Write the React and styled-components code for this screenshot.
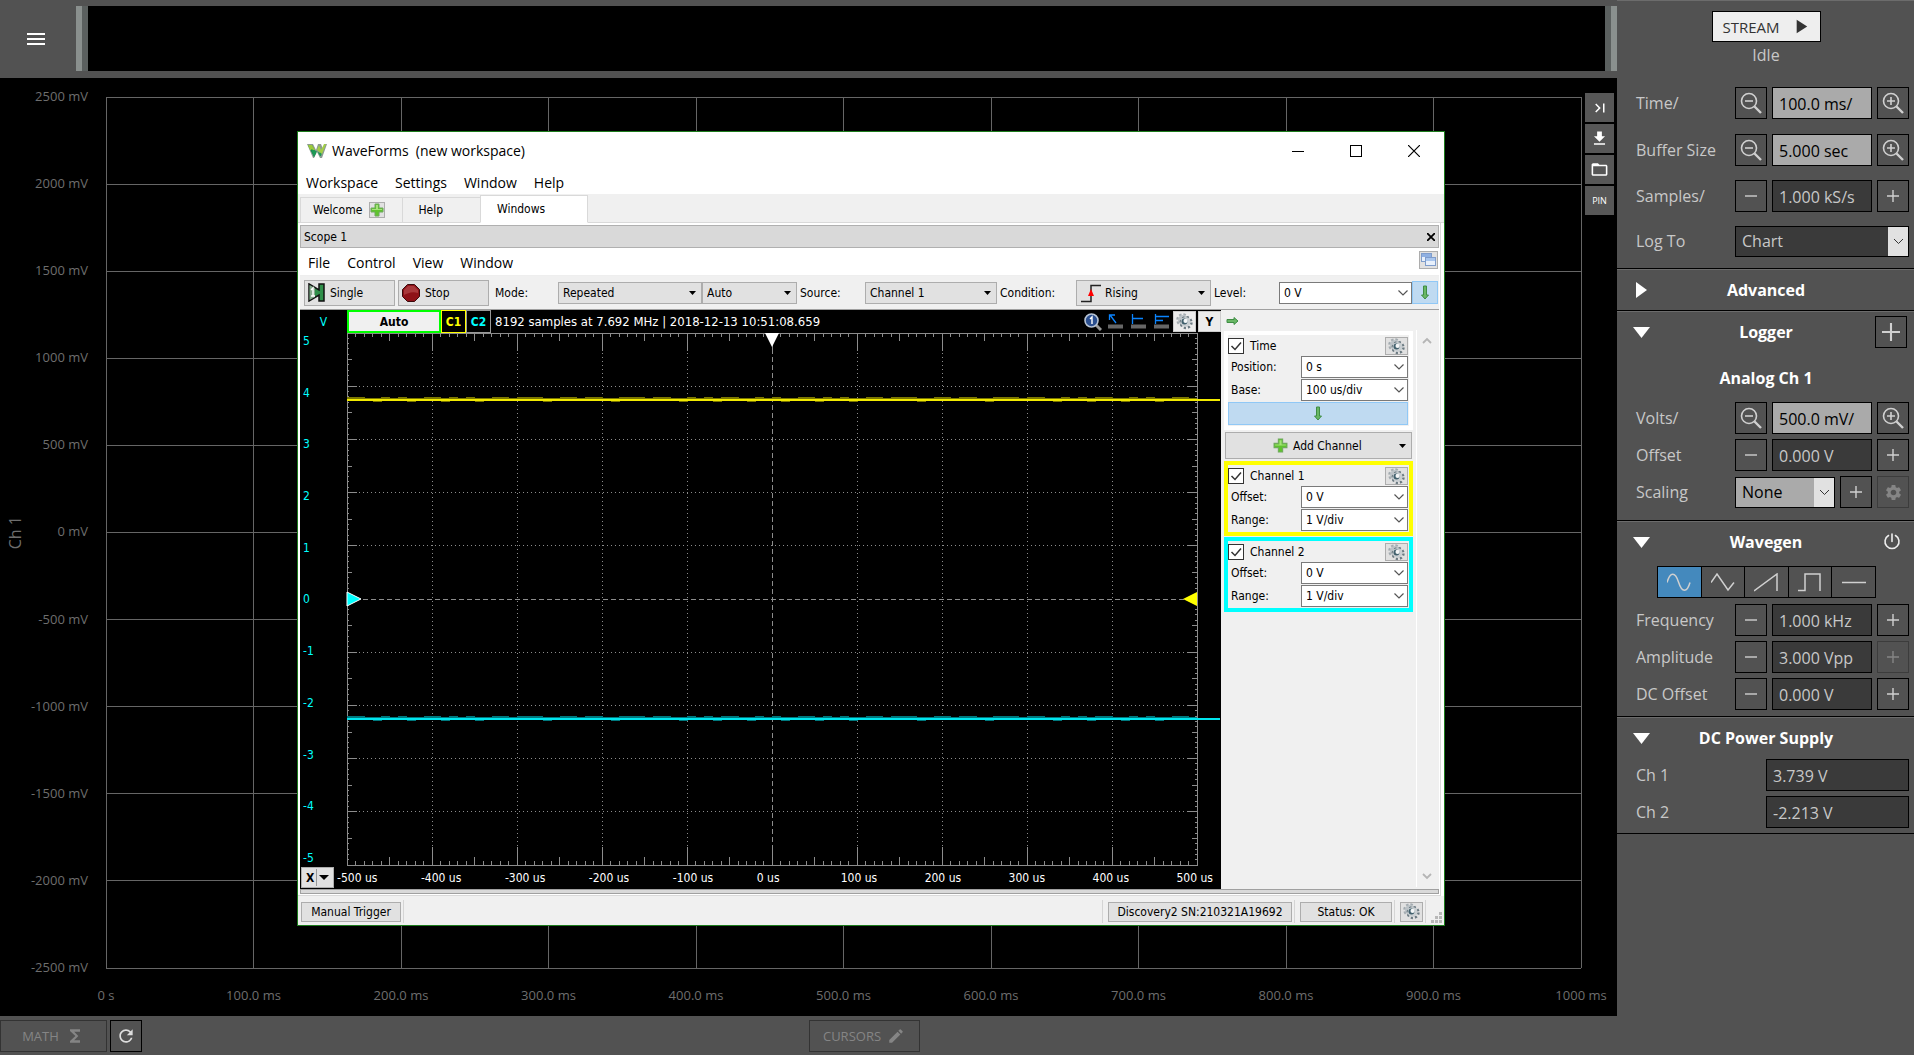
import React from "react";
import styled, { createGlobalStyle, css } from "styled-components";
import {
  MdMenu,
  MdRefresh,
  MdEdit,
  MdDownload,
  MdFolderOpen,
  MdFunctions,
  MdLastPage,
  MdPlayArrow,
  MdSettings,
} from "react-icons/md";

const GlobalStyle = createGlobalStyle`
  * {
    box-sizing: border-box;
  }

  body {
    margin: 0;
    background: #000;
    font-family: "Open Sans", sans-serif;
  }

  button, input, select {
    font: inherit;
    color: inherit;
    margin: 0;
    border-radius: 0;
  }
`;

/* ---------- page ---------- */

const Page = styled.div`
  display: flex;
  min-height: 100vh;
  background: #525252;
`;

const Main = styled.main`
  flex: 1;
  min-width: 0;
  display: flex;
  flex-direction: column;
`;

const TopBar = styled.header`
  display: flex;
  align-items: center;
  height: 78px;
  padding: 6px 0 7px;
`;

const MenuButton = styled.button`
  width: 76px;
  padding: 0 4px 0 0;
  border: 0;
  background: none;
  color: #fff;
  line-height: 0;
`;

const BufferBar = styled.div`
  flex: 1;
  height: 65px;
  background: #000;
  border-style: solid;
  border-width: 0 6px;
  border-color: #8a908e;
  display: flex;
  justify-content: space-between;
`;

const BufferHandle = styled.span`
  width: 6px;
  background: #5b605f;
`;

const ChartArea = styled.section`
  position: relative;
  flex: 1;
  display: grid;
  grid-template-columns: 30px 58px 18px 1fr 36px;
  grid-template-rows: 19px 1fr 48px;
  background: #000;
  color: #6e6e6e;
  font-size: 13px;
  line-height: 18px;
`;

const ChannelName = styled.div`
  grid-column: 1;
  grid-row: 2;
  place-self: center;
  writing-mode: vertical-rl;
  transform: rotate(180deg);
  font-size: 16px;
`;

const YAxis = styled.div`
  grid-column: 2;
  grid-row: 2;
  margin: -10px 0 -8px;
  display: flex;
  flex-direction: column;
  justify-content: space-between;
  text-align: right;
  white-space: nowrap;
`;

const ChartGrid = styled.svg`
  grid-column: 4;
  grid-row: 2;
  width: 100%;
  height: 100%;
  overflow: visible;
  stroke: #666;
  shape-rendering: crispEdges;
`;

const XAxis = styled.div`
  grid-column: 4;
  grid-row: 3;
  margin: 18px -40px 0;
  display: flex;
  justify-content: space-between;

  span {
    width: 80px;
    text-align: center;
  }
`;

const ChartTools = styled.div`
  grid-column: 5;
  grid-row: 1 / 3;
  padding: 15px 0 0 4px;
  display: flex;
  flex-direction: column;
  gap: 2px;
`;

const ToolButton = styled.button`
  width: 29px;
  height: 29px;
  padding: 0;
  border: 0;
  background: #575757;
  color: #fff;
  font-size: 9px;
  display: grid;
  place-items: center;
`;

const BottomBar = styled.footer`
  height: 39px;
  padding-top: 4px;
  display: grid;
  grid-template-columns: 1fr 1fr;
`;

const BarGroup = styled.div`
  display: flex;
  gap: 3px;
`;

const BarButton = styled.button`
  width: ${(p) => p.$w}px;
  height: 32px;
  padding: 0;
  border: 1px solid ${(p) => (p.disabled ? "#333" : "#000")};
  background: none;
  color: ${(p) => (p.disabled ? "#858585" : "#ddd")};
  font-size: 13px;
  display: flex;
  align-items: center;
  justify-content: center;
  gap: 6px;
`;

/* ---------- sidebar ---------- */

const Side = styled.aside`
  width: 297px;
  color: #c8c8c8;
  font-size: 16px;
  line-height: 22px;
`;

const Section = styled.section`
  padding: ${(p) => p.$pad || "0 5px 12px 19px"};
  border-bottom: 1px solid #000;
  box-shadow: inset 0 1px #6c6c6c;
`;

const RunBox = styled.div`
  height: 75px;
  display: flex;
  flex-direction: column;
  align-items: center;
  gap: 2px;
  padding-right: 13px;
`;

const StreamButton = styled.button`
  width: 109px;
  height: 31px;
  border: 1px solid #000;
  background: #eee;
  color: #333;
  font-size: 15px;
  padding: 0 8px 0 10px;
  display: flex;
  align-items: center;
  justify-content: space-between;
`;

const Rows = styled.div`
  display: flex;
  flex-direction: column;
  gap: ${(p) => p.$gap || 5}px;
`;

const Row = styled.div`
  display: flex;
  align-items: center;
  gap: 5px;
  height: ${(p) => (p.$tall ? 34 : 32)}px;

  label {
    flex: ${(p) => (p.$wideLabel ? "0 0 125px" : "0 0 94px")};
  }
`;

const SquareButton = styled.button`
  width: 32px;
  height: 32px;
  flex: none;
  padding: 0;
  border: 1px solid #000;
  background: none;
  color: #d0d0d0;
  display: grid;
  place-items: center;

  &:disabled {
    border-color: #3c3c3c;
    color: #858585;
  }
`;

const DarkField = styled.input`
  flex: 1;
  min-width: 0;
  height: 32px;
  padding: 1px 6px 0;
  border: 1px solid #000;
  background: ${(p) => (p.$light ? "#aaa" : "#3a3a3a")};
  color: ${(p) => (p.$light ? "#000" : "#c8c8c8")};
`;

const Stack = styled.span`
  display: grid;
  align-items: center;
  width: ${(p) => (p.$w ? p.$w + "px" : "auto")};
  flex: ${(p) => (p.$w ? "none" : 1)};

  > * {
    grid-area: 1 / 1;
  }

  > svg, > i {
    pointer-events: none;
    justify-self: end;
  }
`;

const DarkSelect = styled.select`
  appearance: none;
  width: 100%;
  height: 31px;
  padding: 0 6px;
  border: 1px solid #000;
  background: ${(p) => (p.$light ? "#aaa" : "#3a3a3a")};
  color: ${(p) => (p.$light ? "#000" : "#c8c8c8")};
`;

const ArrowBox = styled.i`
  width: 20px;
  height: 29px;
  margin-right: 1px;
  background: #e1e1e1;
  display: grid;
  place-items: center;
`;

const SectionHead = styled.div`
  display: grid;
  grid-template-columns: 32px 1fr 45px;
  align-items: center;
  height: ${(p) => p.$h || 42}px;

  h2 {
    margin: 0;
    text-align: center;
    color: #fff;
    font-size: 16px;
    font-weight: 700;
  }

  > :nth-child(3) {
    justify-self: end;
    margin-right: 2px;
  }
`;

const FoldButton = styled.button`
  padding: 0;
  border: 0;
  background: none;
  color: #fff;
  text-align: left;
  line-height: 0;
  margin-left: ${(p) => (p.$open ? "-3px" : "0")};
`;

const SubTitle = styled.h3`
  margin: 0;
  height: 49px;
  padding-right: 13px;
  line-height: 50px;
  text-align: center;
  color: #fff;
  font-size: 16px;
  font-weight: 700;
`;

const WaveButtons = styled.div`
  display: flex;
  width: 219px;
  margin: 3px auto 6px 21px;
  border: 1px solid #000;
`;

const WaveButton = styled.button`
  flex: 1;
  height: 30px;
  padding: 0;
  border: 0;
  border-left: ${(p) => (p.$on ? "0" : "1px solid #000")};
  background: ${(p) => (p.$on ? "#4489bd" : "none")};
  color: #d0d0d0;
  display: grid;
  place-items: center;
`;

const BareButton = styled.button`
  padding: 0;
  border: 0;
  background: none;
  color: #eee;
  line-height: 0;
`;

const PowerButton = styled(BareButton)`
  padding-right: 6px;
`;

/* ---------- WaveForms window ---------- */

const Window = styled.section`
  position: absolute;
  top: 53px;
  left: 297px;
  right: 172px;
  border: 1px solid #1c7c1c;
  background: #fff;
  color: #000;
  font-family: "DejaVu Sans Condensed", "DejaVu Sans", sans-serif;
  font-size: 12px;
  line-height: 16px;
`;

const TitleBar = styled.div`
  display: flex;
  align-items: center;
  height: 37px;
  padding: 0 1px 0 9px;
  gap: 5px;
  font-family: "Open Sans", sans-serif;
  font-size: 14px;
  white-space: pre;
`;

const WindowButtons = styled.div`
  margin-left: auto;
  display: flex;

  button {
    width: 58px;
    height: 30px;
    padding: 0;
    border: 0;
    background: none;
    display: grid;
    place-items: center;
  }
`;

const MenuRow = styled.nav`
  display: flex;
  align-items: center;
  height: ${(p) => p.$h}px;
  gap: 17px;
  padding: 2px 1px 0 8px;
  font-family: "Open Sans", sans-serif;
  font-size: 14px;

  button {
    padding: 0;
    border: 0;
    background: none;
  }
`;

const Tabs = styled.div`
  display: flex;
  align-items: flex-end;
  height: 29px;
  padding-left: 2px;
  background: #f0f0f0;
  box-shadow: inset 0 -1px #d9d9d9;
`;

const Tab = styled.div`
  display: flex;
  align-items: center;
  width: ${(p) => p.$w}px;
  height: ${(p) => (p.$on ? 28 : 26)}px;
  padding: 0 0 0 ${(p) => (p.$on ? 16 : 12)}px;
  gap: 7px;
  border: 1px solid #d9d9d9;
  border-right-width: ${(p) => (p.$on ? 1 : 0)}px;
  border-bottom-color: ${(p) => (p.$on ? "#fff" : "#d9d9d9")};
  background: ${(p) => (p.$on ? "#fff" : "#f0f0f0")};

  > button:first-child {
    padding: 0;
    border: 0;
    background: none;
  }
`;

const TabPage = styled.div`
  margin-right: 3px;
  padding: 2px 1px 1px 2px;
  border-right: 1px solid #d9d9d9;
  border-bottom: 1px solid #d9d9d9;
`;

const ScopeTitle = styled.div`
  display: flex;
  align-items: center;
  justify-content: space-between;
  height: 23px;
  padding: 1px 3px 0;
  border: 1px solid #b0b0b0;
  background: #d9d9d9;
`;

const SmallButton = styled.button`
  width: ${(p) => p.$w || 23}px;
  height: ${(p) => p.$h || 18}px;
  flex: none;
  padding: 0;
  border: 1px solid #adadad;
  background: #e1e1e1;
  display: grid;
  place-items: center;
`;

const CascadeBox = styled.span`
  margin: 0 0 6px auto;
`;

const ToolRow = styled.div`
  display: flex;
  align-items: center;
  height: 35px;
  padding: 0 0 0 4px;
  border-top: 1px solid #eee;
  border-bottom: 1px solid #a0a0a0;
  background: #f0f0f0;

  label {
    width: ${(p) => p.$labelWidth || 68}px;
    padding-left: 3px;
    flex: none;
  }

  label:first-of-type {
    width: 66px;
  }
`;

const RunButton = styled.button`
  width: 91px;
  height: 26px;
  margin-right: 3px;
  padding: 0 0 0 3px;
  border: 1px solid #adadad;
  background: #e1e1e1;
  display: flex;
  align-items: center;
  gap: 5px;
`;

const WinSelect = styled.select`
  appearance: none;
  width: 100%;
  height: ${(p) => p.$h || 22}px;
  padding: 0 4px 0 ${(p) => p.$pl || 4}px;
  border: 1px solid ${(p) => (p.$edit ? "#7a7a7a" : "#adadad")};
  background: ${(p) => (p.$edit ? "#fff" : "#e1e1e1")};
`;

const blue = css`
  border: 1px solid #90c8f6;
  background: #bfdaf1;
  padding: 0;
  display: grid;
  place-items: center;
`;

const BlueButton = styled.button`
  ${blue}
  width: ${(p) => (p.$w ? p.$w + "px" : "100%")};
  height: 23px;
  flex: none;
`;

const ScopeBody = styled.div`
  display: flex;
  background: #f0f0f0;
`;

const Scope = styled.div`
  flex: 1;
  min-width: 0;
  display: grid;
  grid-template-columns: 47px 1fr 24px;
  grid-template-rows: 23px 533px 23px;
  background: #000;
  color: #fff;
`;

const ScopeUnit = styled.div`
  color: #0ff;
  text-align: center;
  line-height: 25px;
`;

const ScopeHead = styled.div`
  grid-column: 2 / 4;
  display: flex;
  align-items: flex-start;
`;

const AutoButton = styled.button`
  width: 94px;
  height: 23px;
  padding: 0;
  border: 2px solid #0f0;
  background: #f0f0f0;
  color: #000;
  font-weight: bold;
`;

const ChannelButton = styled.button`
  width: 25px;
  height: 23px;
  padding: 0;
  border: 1px solid ${(p) => p.$edge};
  background: #000;
  color: ${(p) => p.$ink};
  font-weight: bold;
`;

const SampleInfo = styled.span`
  flex: 1;
  padding-left: 4px;
  font-size: 13px;
  line-height: 24px;
  white-space: nowrap;
`;

const ScopeIcons = styled.div`
  display: flex;
  align-items: center;
  gap: 2px;
  height: 23px;
`;

const MeasureGroup = styled.span`
  display: flex;
  gap: 8px;
  padding: 0 2px 0 4px;
`;

const HeadButton = styled.button`
  width: 23px;
  height: 21px;
  padding: 0;
  border: 1px solid #ccc;
  background: #ececec;
  color: #000;
  font-weight: bold;
  display: grid;
  place-items: center;
`;

const Volts = styled.div`
  display: flex;
  flex-direction: column;
  justify-content: space-between;
  padding-left: 3px;
  color: #0ff;
`;

const PlotSvg = styled.svg`
  width: 100%;
  height: 532px;
  overflow: visible;
`;

const Times = styled.div`
  grid-column: 1 / 4;
  display: flex;
  align-items: center;
  padding: 0 8px 0 1px;
`;

const XButton = styled.button`
  width: 33px;
  height: 21px;
  flex: none;
  margin-right: 3px;
  padding: 0 2px 0 4px;
  border: 1px solid #adadad;
  background: #e1e1e1;
  color: #000;
  font-weight: bold;
  display: flex;
  align-items: center;
  justify-content: space-between;
`;

const TimeLabels = styled.div`
  flex: 1;
  display: grid;
  grid-template-columns: repeat(10, 1fr) auto;
  white-space: nowrap;
`;

const Panel = styled.div`
  width: 218px;
  display: flex;
`;

const PanelMain = styled.div`
  width: 192px;
  padding-left: 3px;
`;

const PanelTop = styled.div`
  height: 21px;
  padding: 7px 2px 0;
  line-height: 0;
`;

const PanelScroll = styled.div`
  flex: 1;
  margin: 20px 0 2px 3px;
  padding: 7px 2px 7px 0;
  border-left: 1px solid #fff;
  display: flex;
  flex-direction: column;
  justify-content: space-between;
  align-items: center;
`;

const Group = styled.div`
  width: 189px;
  margin-bottom: 1px;
  border: 4px solid ${(p) => p.$c};
  padding: 1px 1px 1px 0;
  display: flex;
  flex-direction: column;
  gap: 1px;
`;

const GroupHead = styled.div`
  display: flex;
  align-items: center;
  height: 19px;

  label {
    flex: 1;
    padding-left: 6px;
  }
`;

const CheckInput = styled.input`
  appearance: none;
  width: 16px;
  height: 16px;
  border: 1px solid #333;
  background: #fff;
`;

const Field = styled.div`
  display: flex;
  align-items: center;

  label {
    flex: 1;
    padding-left: 3px;
  }
`;

const AddButton = styled.button`
  width: 187px;
  height: 27px;
  margin: 2px 1px;
  padding: 0 5px 0 47px;
  border: 1px solid #adadad;
  background: #e1e1e1;
  display: flex;
  align-items: center;
  gap: 5px;

  svg:last-child {
    margin-left: auto;
  }
`;

const ScopeFoot = styled.div`
  height: 5px;
  border: 1px solid #a0a0a0;
  background: #d9d9d9;
`;

const StatusBar = styled.div`
  display: flex;
  align-items: center;
  height: 29px;
  padding: 2px 2px 0 3px;
  gap: 5px;
  background: #f0f0f0;
`;

const StatusButton = styled.button`
  width: ${(p) => p.$w}px;
  height: 20px;
  padding: 0;
  border: 1px solid #adadad;
  background: #e1e1e1;
`;

const Separator = styled.span`
  width: 1px;
  height: 23px;
  margin-left: ${(p) => (p.$push ? "auto" : "-3px")};
  background: #d5d5d5;
`;

/* ---------- icons ---------- */

const Chevron = () => (
  <svg width="15" height="8" fill="none" stroke="#555">
    <path d="M1.500 1.500L6 6l4.500-4.500" strokeWidth="1.200" />
  </svg>
);

const Triangle = () => (
  <svg width="7" height="4">
    <path d="M0 0h7L3.500 4z" fill="#000" />
  </svg>
);

const Zoom = ({ plus }) => (
  <svg width="22" height="22" fill="none" stroke="currentColor">
    <circle cx="9" cy="9" r="7.500" strokeWidth="1.600" />
    <path d="M14.500 14.500L21 21" strokeWidth="2.400" />
    <path d={plus ? "M5 9h8M9 5v8" : "M5 9h8"} strokeWidth="1.600" />
  </svg>
);

const Sign = ({ plus, size = 12 }) => (
  <svg width={size} height={size} viewBox="0 0 12 12" stroke="currentColor" strokeWidth="1.400">
    <path d={plus ? "M0 6h12M6 0v12" : "M0 6h12"} />
  </svg>
);

const Power = () => (
  <svg width="18" height="18" fill="none" stroke="#eee" strokeWidth="1.600">
    <path d="M5.500 2.500a7 7 0 1 0 7 0M9 1v7.500" strokeLinecap="round" />
  </svg>
);

const Fold = ({ open }) =>
  open ? (
    <svg width="17" height="11">
      <path d="M0 0h17L8.500 11z" fill="#fff" />
    </svg>
  ) : (
    <svg width="11" height="16">
      <path d="M0 0v16L11 8z" fill="#fff" />
    </svg>
  );

const GearSmall = () => (
  <svg width="17" height="17" viewBox="0 0 16 16" fill="none">
    <circle cx="6.500" cy="6.500" r="5" stroke="#a3abb0" strokeWidth="2.600" strokeDasharray="2.200 1.700" />
    <circle cx="6.500" cy="6.500" r="4.600" fill="#bcc3c7" />
    <circle cx="9.500" cy="9" r="5" stroke="#6b7a82" strokeWidth="2.400" strokeDasharray="2 1.900" />
    <circle cx="9" cy="8.500" r="4.600" fill="#c9cfd2" />
    <circle cx="8" cy="8" r="2.800" fill="#41606d" />
    <circle cx="9" cy="7.500" r="2" fill="#f4f6f7" />
  </svg>
);

const GreenPlus = ({ size = 14 }) => (
  <svg width={size} height={size} viewBox="0 0 14 14">
    <path d="M5 1h4v4h4v4H9v4H5V9H1V5h4z" fill="#5fc32e" stroke="#6fa95c" />
    <path d="M6 2h2v4h4v1H2V6h4z" fill="#a5e27a" />
  </svg>
);

const GreenArrow = ({ down }) => (
  <svg width={down ? 8 : 13} height={down ? 15 : 8}>
    <path
      d={down ? "M2.500 1h3v9h2L4 14 .500 10h2z" : "M1 2.500h7v-2L12 4 8 7.500v-2H1z"}
      fill="#69b765"
      stroke="#3f8d44"
      strokeWidth="1"
    />
  </svg>
);

const Logo = () => (
  <svg width="20" height="16">
    <path d="M0 1h6l3 6 2-6h3l2 5 2-5h2l-5 14h-2l-3-6-3 6H6z" fill="#8d9a92" />
    <path d="M1 2h4l6 12-2-4-2 4z" fill="#0d8a4e" />
    <path d="M1 2h4l3 5-5 0z" fill="#9cc93c" />
    <path d="M4 6l5 2 4 2 3-4-2 7h-1L10 8l-3 6z" fill="#1d9a55" />
    <path d="M14 7l3-6h2l-4 10-5-4 2-5z" fill="#a2cf45" />
  </svg>
);

const SingleIcon = () => (
  <svg width="17" height="19">
    <path d="M1 1l10 6V1h5v17h-5v-6L1 18z" fill="#2f8f4a" stroke="#111" strokeWidth="1.500" />
    <path d="M1.500 2L7 5v9l-5.500 3z" fill="#86a98c" />
    <path d="M3 7l2-2v8M3 13h4" stroke="#fff" strokeWidth="1.400" fill="none" />
  </svg>
);

const StopIcon = () => (
  <svg width="18" height="18">
    <path d="M5.500.500h7l5 5v7l-5 5h-7l-5-5v-7z" fill="#8e1218" stroke="#3a0a0c" />
    <path d="M6 2h6l4 4v3C10 7 6 9 2 11V6z" fill="#a8383b" />
  </svg>
);

const RisingIcon = () => (
  <svg width="20" height="20" fill="none" stroke="#222" strokeWidth="1.500">
    <path d="M0 18.500h10V2.500h10" />
    <path d="M10 6l3 7H7z" fill="red" stroke="none" />
  </svg>
);

const LensIcon = () => (
  <svg width="18" height="18">
    <path d="M12 12l5 5" stroke="#999" strokeWidth="3" />
    <circle cx="7.500" cy="7.500" r="6.500" fill="#2b4f8f" stroke="#b8c4d4" strokeWidth="1.600" />
    <path d="M6 6l2-2v7" stroke="#fff" strokeWidth="1.400" fill="none" />
  </svg>
);

const MeasureIcon = ({ d }) => (
  <svg width="15" height="15" fill="none" stroke="#0a84ff" strokeWidth="1.300">
    <path d="M0 12.500h15" stroke="#666" strokeWidth="4" />
    <path d={d} />
  </svg>
);

const CascadeIcon = () => (
  <svg width="15" height="14">
    <rect x=".5" y=".5" width="10" height="8" fill="#e8f0fb" stroke="#7f9dcc" />
    <rect x="1" y="1" width="9" height="3" fill="#8fb0e2" />
    <rect x="4.500" y="4.500" width="10" height="8" fill="#e8f0fb" stroke="#7f9dcc" />
    <rect x="5" y="5" width="9" height="3" fill="#a9c6ee" />
  </svg>
);

const Grip = () => (
  <svg width="11" height="23" fill="#b8b8b8">
    <path d="M8 12h3v3H8zM4 16h3v3H4zM8 16h3v3H8zM0 20h3v3H0zM4 20h3v3H4zM8 20h3v3H8z" />
  </svg>
);

/* ---------- data ---------- */

const chartVolts = [2500, 2000, 1500, 1000, 500, 0, -500, -1000, -1500, -2000, -2500];
const chartTimes = ["0 s", "100.0 ms", "200.0 ms", "300.0 ms", "400.0 ms", "500.0 ms", "600.0 ms", "700.0 ms", "800.0 ms", "900.0 ms", "1000 ms"];
const scopeVolts = [5, 4, 3, 2, 1, 0, -1, -2, -3, -4, -5];
const scopeTimes = [-500, -400, -300, -200, -100, 0, 100, 200, 300, 400, 500];
const divs = [...Array(11).keys()];
const ticks = [...Array(99).keys()].map((i) => i + 1);

const waves = [
  { name: "Sine", d: "M0 9.500C3 -1 8 -2 11.500 9S20 20 23 9.500" },
  { name: "Triangle", d: "M0 9.500L6 1l11 16 6-7.500" },
  { name: "Sawtooth", d: "M0 18L23 1v17" },
  { name: "Square", d: "M0 17.500h7V1h15v17" },
  { name: "DC", d: "M0 9.500h24" },
];

/* ---------- parts ---------- */

const tickLength = (i, small, mid, big) => (i % 10 === 0 ? big : i % 5 === 0 ? mid : small);

const Trace = ({ y, color, dim }) => (
  <g shapeRendering="crispEdges">
    <rect x="0" y={y - 2} width="100%" height="3" fill={dim} />
    {ticks.map((i) =>
      (i * 7) % 11 < 8 ? (
        <rect key={i} x={i - 1 + "%"} y={i % 4 ? y - 3 : y + 1} width="1.1%" height="1" fill={dim} />
      ) : null
    )}
    <rect x="0" y={y - 1} width="102.7%" height="2" fill={color} />
  </g>
);

const ScopePlot = () => (
  <PlotSvg>
    <g stroke="#8c8c8c" shapeRendering="crispEdges">
      <rect x="0" y="0" width="100%" height="100%" fill="none" />
      {divs.slice(1, 10).map((i) => (
        <g key={i} strokeDasharray={i === 5 ? "5 3" : "1 3"}>
          <line x1={i * 10 + "%"} x2={i * 10 + "%"} y1="0" y2="100%" />
          <line y1={i * 10 + "%"} y2={i * 10 + "%"} x1="0" x2="100%" />
        </g>
      ))}
      {ticks.map((i) => {
        const v = tickLength(i, 4, 8, 18);
        const h = tickLength(i, 2, 5, 10);
        return (
          <g key={i}>
            <line x1={i + "%"} x2={i + "%"} y1="0" y2={v} />
            <line x1={i + "%"} x2={i + "%"} y1={532 - v} y2="532" />
            <line y1={i + "%"} y2={i + "%"} x1="0" x2={h} />
            <svg x="100%" overflow="visible" height="532" width="1">
              <line y1={i + "%"} y2={i + "%"} x1={-h} x2="0" />
            </svg>
          </g>
        );
      })}
    </g>
    <Trace y={67} color="#f2ea00" dim="#7a7600" />
    <Trace y={386} color="#00e5ee" dim="#00797e" />
    <svg x="50%" overflow="visible" width="1" height="1">
      <path d="M-7 0h14L0 14z" fill="#fff" />
    </svg>
    <svg y="50%" overflow="visible" width="1" height="1">
      <path d="M0 -7v14L14 0z" fill="#0ff" stroke="#fff" />
    </svg>
    <svg x="100%" y="50%" overflow="visible" width="1" height="1">
      <path d="M0 -7v14L-14 0z" fill="#ff0" />
    </svg>
  </PlotSvg>
);

const ComboIcon = styled.i`
  && {
    justify-self: ${(p) => (p.$start ? "start" : "end")};
  }
  padding: 0 6px 0 5px;
  line-height: 0;
`;

const Combo = ({ id, value, w, edit, icon, h, pl }) => (
  <Stack $w={w}>
    <WinSelect id={id} $edit={edit} $h={h} $pl={pl} aria-label={id}>
      <option>{value}</option>
    </WinSelect>
    {icon && <ComboIcon $start>{icon}</ComboIcon>}
    {edit ? <Chevron /> : <ComboIcon><Triangle /></ComboIcon>}
  </Stack>
);

const WideLabel = styled.span`
  width: 79px;
  flex: none;
`;

const Check = ({ id }) => (
  <Stack $w={16}>
    <CheckInput id={id} type="checkbox" defaultChecked />
    <svg width="16" height="16" fill="none" stroke="#333" strokeWidth="1.500">
      <path d="M3.500 8L7 11.500 13 4.500" />
    </svg>
  </Stack>
);

const PanelGroup = ({ id, title, color, fields, children }) => (
  <Group $c={color}>
    <GroupHead>
      <Check id={id} />
      <label htmlFor={id}>{title}</label>
      <SmallButton aria-label={title + " options"}>
        <GearSmall />
      </SmallButton>
    </GroupHead>
    {fields.map(([name, value]) => (
      <Field key={name}>
        <label htmlFor={id + name}>{name}:</label>
        <Combo id={id + name} value={value} w={107} edit pl={4} />
      </Field>
    ))}
    {children}
  </Group>
);

const WaveFormsWindow = () => (
  <Window>
    <TitleBar>
      <Logo />
      {"WaveForms  (new workspace)"}
      <WindowButtons>
        <button aria-label="Minimize">
          <svg width="12" height="12"><path d="M0 6.500h12" stroke="#000" /></svg>
        </button>
        <button aria-label="Maximize">
          <svg width="12" height="12"><rect x=".5" y=".5" width="11" height="11" fill="none" stroke="#000" /></svg>
        </button>
        <button aria-label="Close">
          <svg width="12" height="12"><path d="M0 0l12 12M12 0L0 12" stroke="#000" strokeWidth="1.200" /></svg>
        </button>
      </WindowButtons>
    </TitleBar>
    <MenuRow $h={25}>
      {["Workspace", "Settings", "Window", "Help"].map((m) => (
        <button key={m}>{m}</button>
      ))}
    </MenuRow>
    <Tabs>
      <Tab $w={102}>
        <button>Welcome</button>
        <SmallButton $w={16} $h={16} aria-label="New instrument"><GreenPlus /></SmallButton>
      </Tab>
      <Tab $w={78}>
        <button>&nbsp;Help</button>
      </Tab>
      <Tab $w={108} $on>
        <button>Windows</button>
      </Tab>
    </Tabs>
    <TabPage>
      <ScopeTitle>
        Scope 1
        <BareButton aria-label="Close scope">
          <svg width="8" height="8"><path d="M0 0l8 8M8 0L0 8" stroke="#000" strokeWidth="1.800" /></svg>
        </BareButton>
      </ScopeTitle>
      <MenuRow $h={27}>
        {["File", "Control", "View", "Window"].map((m) => (
          <button key={m}>{m}</button>
        ))}
        <CascadeBox>
          <SmallButton as="span" $w={19}><CascadeIcon /></SmallButton>
        </CascadeBox>
      </MenuRow>
      <ToolRow>
        <RunButton><SingleIcon />Single</RunButton>
        <RunButton><StopIcon />Stop</RunButton>
        <label htmlFor="mode">Mode:</label>
        <Combo id="mode" value="Repeated" w={144} />
        <Combo id="modeAuto" value="Auto" w={95} />
        <label htmlFor="source">Source:</label>
        <Combo id="source" value="Channel 1" w={132} />
        <WideLabel><label htmlFor="condition">Condition:</label></WideLabel>
        <Combo id="condition" value="Rising" w={135} h={26} pl={28} icon={<RisingIcon />} />
        <label htmlFor="level">Level:</label>
        <Combo id="level" value="0 V" w={133} edit />
        <BlueButton $w={26} aria-label="Level down"><GreenArrow down /></BlueButton>
      </ToolRow>
      <ScopeBody>
        <Scope>
          <ScopeUnit>V</ScopeUnit>
          <ScopeHead>
            <AutoButton>Auto</AutoButton>
            <ChannelButton $edge="#ff0" $ink="#ff0">C1</ChannelButton>
            <ChannelButton $edge="#999" $ink="#0ff">C2</ChannelButton>
            <SampleInfo>8192 samples at 7.692 MHz | 2018-12-13 10:51:08.659</SampleInfo>
            <ScopeIcons>
              <LensIcon />
              <MeasureGroup>
                <MeasureIcon d="M8 9L2 1M1.500 6V1H7" />
                <MeasureIcon d="M1.500 0v10M1.500 4.500H12" />
                <MeasureIcon d="M1.500 0v10M1.500 2.500H15M1.500 6.500H9" />
              </MeasureGroup>
              <HeadButton aria-label="Plot options"><GearSmall /></HeadButton>
              <HeadButton>Y</HeadButton>
            </ScopeIcons>
          </ScopeHead>
          <Volts>
            {scopeVolts.map((v) => <span key={v}>{v}</span>)}
          </Volts>
          <ScopePlot />
          <Times>
            <XButton>
              X
              <svg width="16" height="17">
                <path d="M1.500 0v17" stroke="#999" />
                <path d="M4 6h10l-5 5z" />
              </svg>
            </XButton>
            <TimeLabels>
              {scopeTimes.map((t) => <span key={t}>{t} us</span>)}
            </TimeLabels>
          </Times>
        </Scope>
        <Panel>
          <PanelMain>
            <PanelTop><GreenArrow /></PanelTop>
            <PanelGroup id="time" title="Time" color="#fff" fields={[["Position", "0 s"], ["Base", "100 us/div"]]}>
              <BlueButton aria-label="Expand"><GreenArrow down /></BlueButton>
            </PanelGroup>
            <AddButton><GreenPlus size={15} />Add Channel<Triangle /></AddButton>
            <PanelGroup id="ch1" title="Channel 1" color="#ff0" fields={[["Offset", "0 V"], ["Range", "1 V/div"]]} />
            <PanelGroup id="ch2" title="Channel 2" color="#0ff" fields={[["Offset", "0 V"], ["Range", "1 V/div"]]} />
          </PanelMain>
          <PanelScroll>
            <svg width="10" height="7" fill="none" stroke="#b5b5b5" strokeWidth="1.800"><path d="M1 6l4-4 4 4" /></svg>
            <svg width="10" height="7" fill="none" stroke="#b5b5b5" strokeWidth="1.800"><path d="M1 1l4 4 4-4" /></svg>
          </PanelScroll>
        </Panel>
      </ScopeBody>
      <ScopeFoot />
    </TabPage>
    <StatusBar>
      <StatusButton $w={100}>Manual Trigger</StatusButton>
      <Separator />
      <Separator $push />
      <StatusButton $w={184}>Discovery2 SN:210321A19692</StatusButton>
      <Separator />
      <StatusButton $w={92}>Status: OK</StatusButton>
      <Separator />
      <SmallButton $h={20} aria-label="Device options"><GearSmall /></SmallButton>
      <Separator />
      <Grip />
    </StatusBar>
  </Window>
);

const Stepper = ({ id, label, value, zoom, light, maxed, tall }) => (
  <Row $tall={tall}>
    <label htmlFor={id}>{label}</label>
    <SquareButton aria-label={label + " decrease"}>{zoom ? <Zoom /> : <Sign />}</SquareButton>
    <DarkField id={id} defaultValue={value} $light={light} />
    <SquareButton aria-label={label + " increase"} disabled={maxed}>
      {zoom ? <Zoom plus /> : <Sign plus />}
    </SquareButton>
  </Row>
);

const Head = ({ title, open, h, children }) => (
  <SectionHead $h={h}>
    <FoldButton $open={open} aria-label={"Toggle " + title}><Fold open={open} /></FoldButton>
    <h2>{title}</h2>
    {children}
  </SectionHead>
);

const SelectArrow = () => (
  <ArrowBox>
    <svg width="11" height="7" fill="none" stroke="#333"><path d="M1 1l4.500 4.500L10 1" /></svg>
  </ArrowBox>
);

const Sidebar = () => (
  <Side>
    <Section as="div" $pad="11px 5px 11px 19px">
      <RunBox>
        <StreamButton>STREAM <MdPlayArrow size={23} /></StreamButton>
        <span>Idle</span>
      </RunBox>
      <Rows $gap={13}>
        <Stepper id="timeDiv" label="Time/" value="100.0 ms/" zoom light tall />
        <Stepper id="buffer" label="Buffer Size" value="5.000 sec" zoom light tall />
        <Stepper id="samples" label="Samples/" value="1.000 kS/s" />
        <Row>
          <label htmlFor="logTo">Log To</label>
          <Stack>
            <DarkSelect id="logTo"><option>Chart</option></DarkSelect>
            <SelectArrow />
          </Stack>
        </Row>
      </Rows>
    </Section>
    <Section $pad="0 5px 0 19px">
      <Head title="Advanced" h={41} />
    </Section>
    <Section>
      <Head title="Logger" open>
        <SquareButton aria-label="Add logger"><Sign plus size={18} /></SquareButton>
      </Head>
      <SubTitle>Analog Ch 1</SubTitle>
      <Rows>
        <Stepper id="volts" label="Volts/" value="500.0 mV/" zoom light />
        <Stepper id="offset" label="Offset" value="0.000 V" />
        <Row>
          <label htmlFor="scaling">Scaling</label>
          <Stack>
            <DarkSelect id="scaling" $light><option>None</option></DarkSelect>
            <SelectArrow />
          </Stack>
          <SquareButton aria-label="Add scaling"><Sign plus /></SquareButton>
          <SquareButton disabled aria-label="Edit scaling"><MdSettings size={19} /></SquareButton>
        </Row>
      </Rows>
    </Section>
    <Section $pad="0 5px 6px 19px">
      <Head title="Wavegen" open>
        <PowerButton aria-label="Power"><Power /></PowerButton>
      </Head>
      <WaveButtons>
        {waves.map((w, i) => (
          <WaveButton key={w.name} $on={i === 0} aria-label={w.name}>
            <svg width="24" height="19" fill="none" stroke="currentColor" strokeWidth="1.500"><path d={w.d} /></svg>
          </WaveButton>
        ))}
      </WaveButtons>
      <Rows>
        <Stepper id="frequency" label="Frequency" value="1.000 kHz" />
        <Stepper id="amplitude" label="Amplitude" value="3.000 Vpp" maxed />
        <Stepper id="dcOffset" label="DC Offset" value="0.000 V" />
      </Rows>
    </Section>
    <Section $pad="0 5px 5px 19px">
      <Head title="DC Power Supply" open />
      <Rows>
        <Row $wideLabel>
          <label htmlFor="supply1">Ch 1</label>
          <DarkField id="supply1" defaultValue="3.739 V" />
        </Row>
        <Row $wideLabel>
          <label htmlFor="supply2">Ch 2</label>
          <DarkField id="supply2" defaultValue="-2.213 V" />
        </Row>
      </Rows>
    </Section>
  </Side>
);

const App = () => (
  <Page>
    <GlobalStyle />
    <Main>
      <TopBar>
        <MenuButton aria-label="Menu"><MdMenu size={24} /></MenuButton>
        <BufferBar><BufferHandle /><BufferHandle /></BufferBar>
      </TopBar>
      <ChartArea>
        <ChannelName>Ch 1</ChannelName>
        <YAxis>
          {chartVolts.map((v) => <span key={v}>{v} mV</span>)}
        </YAxis>
        <ChartGrid>
          {divs.map((i) => (
            <g key={i}>
              <line x1={i * 10 + "%"} x2={i * 10 + "%"} y1="0" y2="100%" />
              <line y1={i * 10 + "%"} y2={i * 10 + "%"} x1="0" x2="100%" />
            </g>
          ))}
        </ChartGrid>
        <XAxis>
          {chartTimes.map((t) => <span key={t}>{t}</span>)}
        </XAxis>
        <ChartTools>
          <ToolButton aria-label="Go to end"><MdLastPage size={18} /></ToolButton>
          <ToolButton aria-label="Download"><MdDownload size={19} /></ToolButton>
          <ToolButton aria-label="Open"><MdFolderOpen size={19} /></ToolButton>
          <ToolButton>PIN</ToolButton>
        </ChartTools>
        <WaveFormsWindow />
      </ChartArea>
      <BottomBar>
        <BarGroup>
          <BarButton $w={107} disabled>MATH <MdFunctions size={20} /></BarButton>
          <BarButton $w={32} aria-label="Reload"><MdRefresh size={20} /></BarButton>
        </BarGroup>
        <BarGroup>
          <BarButton $w={111} disabled>CURSORS <MdEdit size={18} /></BarButton>
        </BarGroup>
      </BottomBar>
    </Main>
    <Sidebar />
  </Page>
);

export default App;
